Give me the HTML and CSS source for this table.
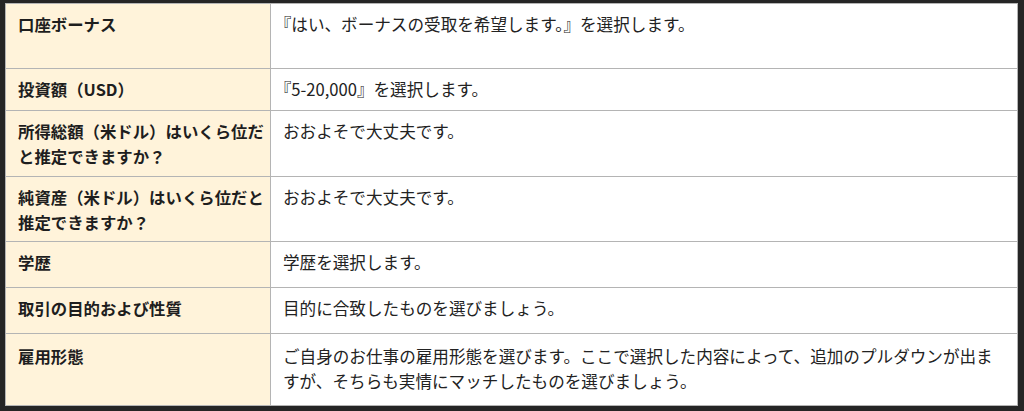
FILE: index.html
```html
<!DOCTYPE html>
<html lang="ja">
<head>
<meta charset="utf-8">
<link rel="stylesheet" href="styles.css">
</head>
<body>
<div class="frame">
<table class="info">
  <tr class="r1">
    <th>口座ボーナス</th>
    <td>『はい、ボーナスの受取を希望します。』を選択します。</td>
  </tr>
  <tr class="r2">
    <th>投資額（USD）</th>
    <td>『5-20,000』を選択します。</td>
  </tr>
  <tr class="r3">
    <th>所得総額（米ドル）はいくら位だと推定できますか？</th>
    <td>おおよそで大丈夫です。</td>
  </tr>
  <tr class="r4">
    <th>純資産（米ドル）はいくら位だと推定できますか？</th>
    <td>おおよそで大丈夫です。</td>
  </tr>
  <tr class="r5">
    <th>学歴</th>
    <td>学歴を選択します。</td>
  </tr>
  <tr class="r6">
    <th>取引の目的および性質</th>
    <td>目的に合致したものを選びましょう。</td>
  </tr>
  <tr class="r7">
    <th>雇用形態</th>
    <td>ご自身のお仕事の雇用形態を選びます。ここで選択した内容によって、追加のプルダウンが出ますが、そちらも実情にマッチしたものを選びましょう。</td>
  </tr>
</table>
</div>
</body>
</html>
```
FILE: styles.css
```css
html, body {
  margin: 0;
  padding: 0;
  background: #252525;
}
body {
  width: 1024px;
  height: 411px;
  overflow: hidden;
  font-family: "Noto Sans CJK JP", "Noto Sans", sans-serif;
}
.frame {
  padding: 3px 6px 6px 5px;
}
.info {
  width: 1013px;
  border-collapse: collapse;
  table-layout: fixed;
  background: #fff;
}
.info th, .info td {
  border: 1px solid #b4b4b4;
  vertical-align: top;
  text-align: left;
  padding: 8px 12px 2px 12px;
  font-size: 16px;
  line-height: 25px;
}
.info th {
  width: 248px;
  padding-right: 4px;
  background: #fff3da;
  color: #1e1e1e;
  font-weight: 700;
  font-size: 16.4px;
}
.info td {
  color: #222;
  font-weight: 400;
  font-size: 16.6px;
  text-spacing-trim: trim-start;
}
.r1 { height: 65px; }
.r2 { height: 42px; }
.r3 { height: 66px; }
.r4 { height: 65px; }
.r5 { height: 46px; }
.r6 { height: 46px; }
.r7 { height: 72px; }
.r7 th, .r7 td { padding-top: 10px; }
```
